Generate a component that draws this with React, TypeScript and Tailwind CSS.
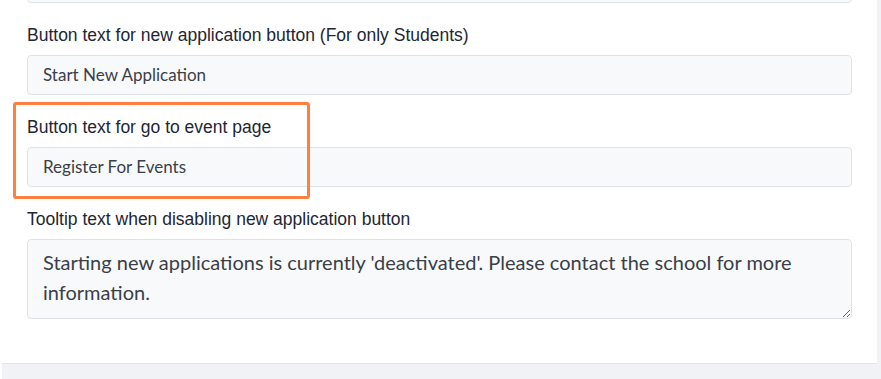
export default function App() {
  return (
    <div className="relative w-[881px] h-[379px] overflow-hidden bg-white">
      <div className="ml-[2px] h-full bg-[#f1f2f6]">
        <div className="w-[875px] h-[364px] bg-white border-b border-[#e1e4ea] overflow-hidden">
          <div className="pl-[25px] pr-[25px]">
            {/* cut-off field above */}
            <div className="-mt-[37px] h-10 rounded border border-[#dfe2e8] bg-[#f8f9fb]" />

            <Field label="Button text for new application button (For only Students)" value="Start New Application" />
            <Field label="Button text for go to event page" value="Register For Events" />

            <div className="mt-5">
              <label className="block h-6 mb-2 text-[17.5px] leading-6 text-[#1e2635] font-['Liberation_Sans',Arial,sans-serif]">
                Tooltip text when disabling new application button
              </label>
              <textarea
                readOnly
                defaultValue="Starting new applications is currently 'deactivated'. Please contact the school for more information."
                className="block w-full h-20 rounded border border-[#dfe2e8] bg-[#f8f9fb] px-[15px] pt-[7px] text-[20px] leading-[30px] text-[#3a3f48] font-['Lato',sans-serif] outline-none"
              />
            </div>
          </div>
        </div>
      </div>

      {/* highlight annotation */}
      <div className="absolute left-[13px] top-[102px] w-[297px] h-[97px] rounded-[3px] border-[3px] border-[#ff7f41]" />
    </div>
  );
}

function Field({ label, value }: { label: string; value: string }) {
  return (
    <div className="mt-5">
      <label className="block h-6 mb-2 text-[17.5px] leading-6 text-[#1e2635] font-['Liberation_Sans',Arial,sans-serif]">
        {label}
      </label>
      <div className="h-10 flex items-center rounded border border-[#dfe2e8] bg-[#f8f9fb] px-[15px] text-[17px] text-[#3a3f48] font-['Lato',sans-serif]">
        {value}
      </div>
    </div>
  );
}
